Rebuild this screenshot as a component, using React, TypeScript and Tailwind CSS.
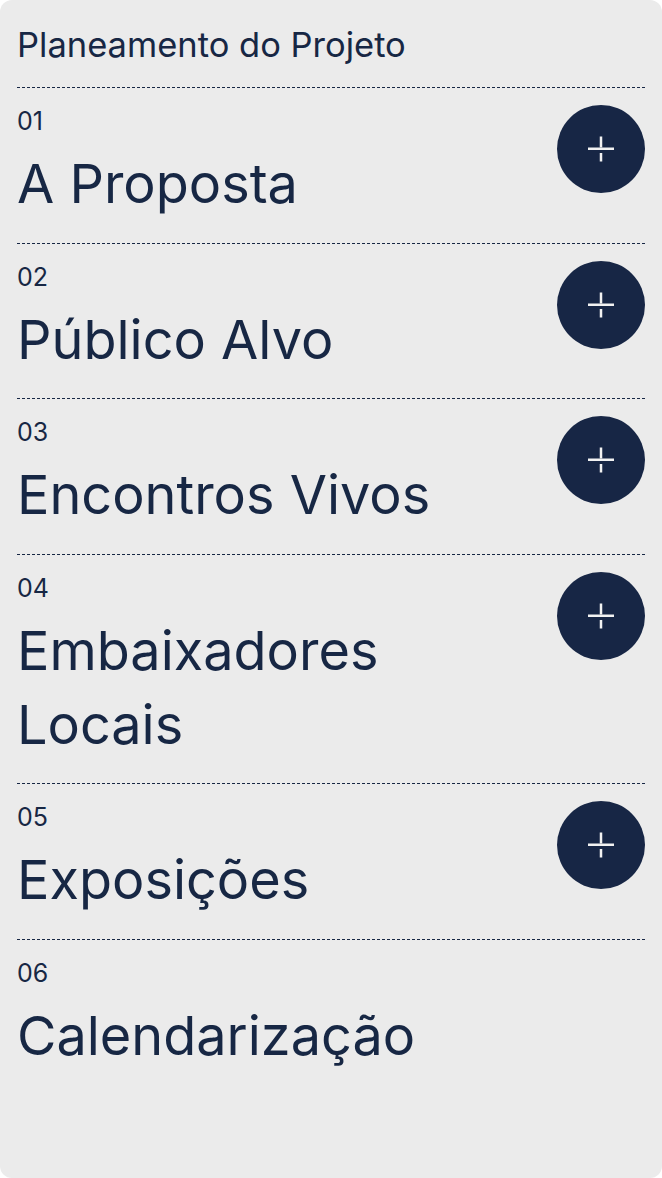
const sections = [
  { num: '01', title: 'A Proposta', open: true },
  { num: '02', title: 'Público Alvo', open: true },
  { num: '03', title: 'Encontros Vivos', open: true },
  { num: '04', title: 'Embaixadores Locais', open: true },
  { num: '05', title: 'Exposições', open: true },
  { num: '06', title: 'Calendarização', open: false }
]

function Divider() {
  return (
    <div className="h-px w-full bg-[repeating-linear-gradient(to_right,#172744_0px,#172744_3px,transparent_3px,transparent_5px)]" />
  )
}

function PlusIcon() {
  return (
    <svg width="26" height="26" viewBox="0 0 26 26" fill="#f2f2f2">
      <rect x="0" y="11.5" width="26" height="2.5" />
      <rect x="11.75" y="0.5" width="2.5" height="11" />
      <rect x="11.75" y="17" width="2.5" height="8.5" />
    </svg>
  )
}

export default function App() {
  return (
    <div className="min-h-[1178px] bg-white">
      <div className="min-h-[1178px] rounded-xl bg-[#ebebeb] px-[17px] font-['Inter',sans-serif] text-[#172744]">
        {/* Header */}
        <h1 className="pt-[25px] pb-[22px] text-[34.5px] leading-[40px] font-normal">
          Planeamento do Projeto
        </h1>

        {/* Sections */}
        {sections.map((section) => (
          <div key={section.num}>
            <Divider />
            <div className="flex items-start justify-between gap-4 pt-[18px] pb-[21.5px]">
              <div>
                <p className="text-[25px] leading-[30px]">{section.num}</p>
                <h2 className="mt-[11px] text-[54px] leading-[74px] font-normal">{section.title}</h2>
              </div>
              {section.open && (
                <button className="-mt-px flex size-[88px] shrink-0 items-center justify-center rounded-full bg-[#172645]">
                  <PlusIcon />
                </button>
              )}
            </div>
          </div>
        ))}
      </div>
    </div>
  )
}
